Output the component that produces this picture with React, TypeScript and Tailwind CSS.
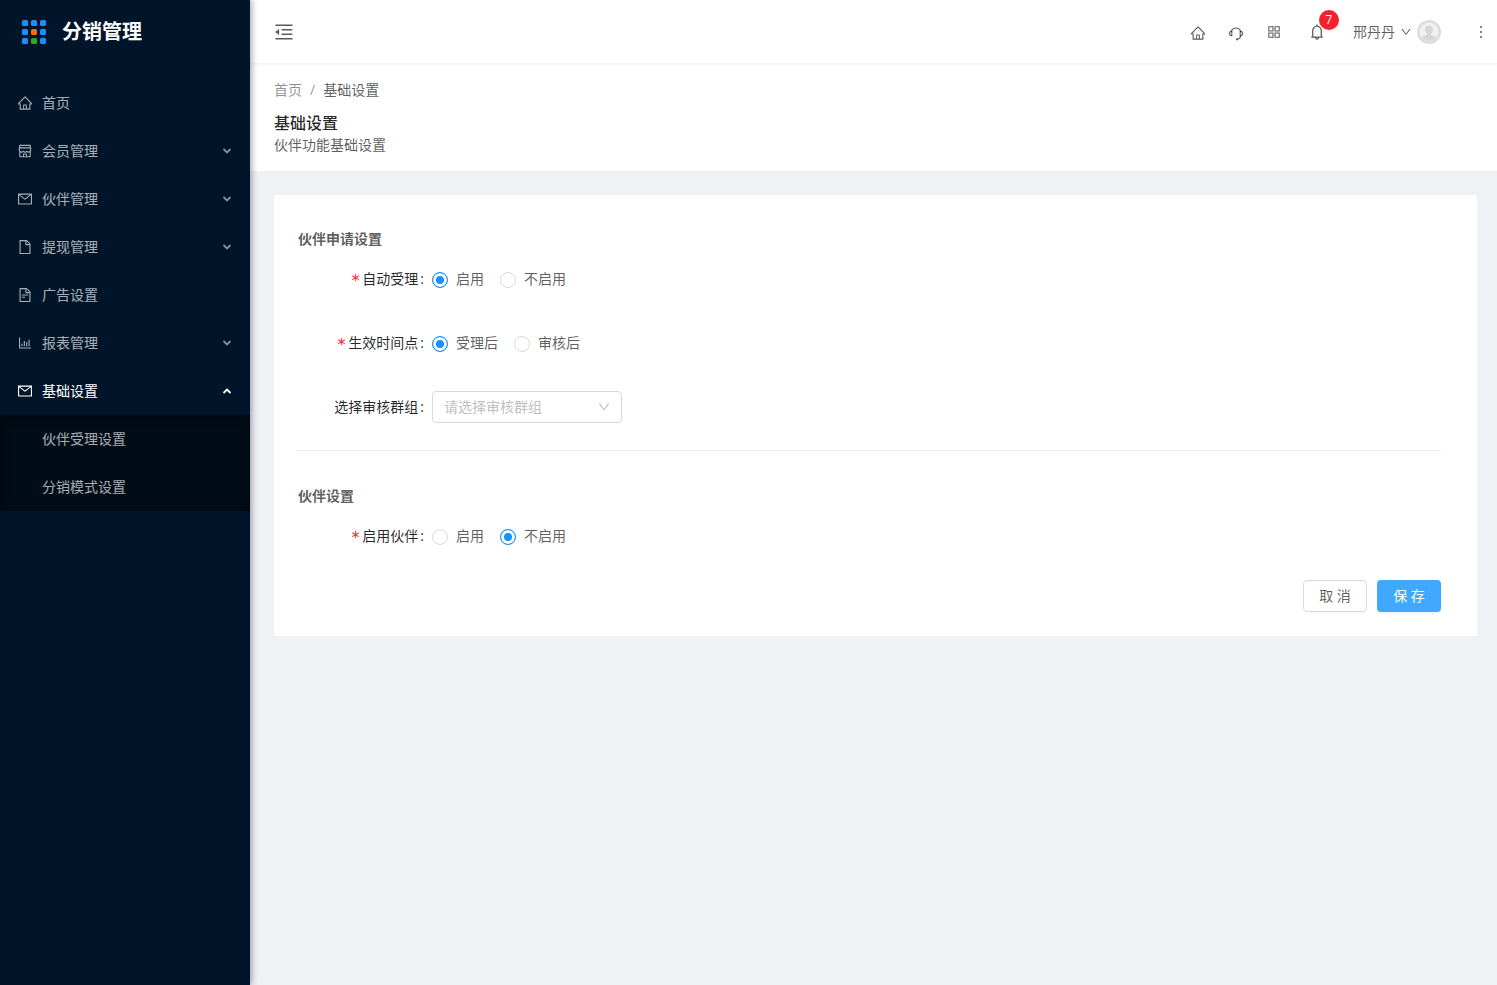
import { useState } from "react";
import type { ReactNode } from "react";
import type { IconType } from "react-icons";
import {
  AiOutlineAppstore,
  AiOutlineBarChart,
  AiOutlineBell,
  AiOutlineDown,
  AiOutlineFile,
  AiOutlineFileText,
  AiOutlineHome,
  AiOutlineMail,
  AiOutlineMenuFold,
  AiOutlineMore,
  AiOutlineShop,
} from "react-icons/ai";

type MenuItem = {
  key: string;
  label: string;
  icon: IconType;
  expandable?: boolean;
  children?: string[];
};

const menu: MenuItem[] = [
  { key: "home", label: "首页", icon: AiOutlineHome },
  { key: "member", label: "会员管理", icon: AiOutlineShop, expandable: true },
  { key: "partner", label: "伙伴管理", icon: AiOutlineMail, expandable: true },
  { key: "withdraw", label: "提现管理", icon: AiOutlineFile, expandable: true },
  { key: "ad", label: "广告设置", icon: AiOutlineFileText },
  { key: "report", label: "报表管理", icon: AiOutlineBarChart, expandable: true },
  {
    key: "basic",
    label: "基础设置",
    icon: AiOutlineMail,
    expandable: true,
    children: ["伙伴受理设置", "分销模式设置"],
  },
];

function Logo() {
  const fills = ["#1890ff", "#1890ff", "#1890ff", "#1890ff", "#ff6a00", "#1890ff", "#1890ff", "#2ea52e", "#1890ff"];
  return (
    <svg width="24" height="24" viewBox="0 0 24 24" aria-hidden="true">
      {fills.map((fill, i) => (
        <rect key={i} x={(i % 3) * 9} y={Math.floor(i / 3) * 9} width="6" height="6" rx="1.5" fill={fill} />
      ))}
    </svg>
  );
}

function MenuArrow({ open }: { open: boolean }) {
  return (
    <svg
      width="10"
      height="10"
      viewBox="0 0 10 10"
      fill="none"
      stroke="currentColor"
      strokeWidth="1.8"
      className={open ? "" : "opacity-80"}
      aria-hidden="true"
    >
      <path d={open ? "M1.5 7 5 3.5 8.5 7" : "M1.5 3 5 6.5 8.5 3"} />
    </svg>
  );
}

function HeadsetIcon() {
  return (
    <svg width="16" height="16" viewBox="0 0 16 16" fill="none" stroke="currentColor" strokeWidth="1.1" aria-hidden="true">
      <path d="M3.3 6.5a4.9 4.9 0 0 1 9.4 0" />
      <path d="M3.8 6.3v4.4c-1.500 0-2.300-.9-2.300-2.200s.8-2.200 2.300-2.200z" />
      <path d="M12.2 6.3v4.4c1.500 0 2.300-.9 2.300-2.200s-.8-2.200-2.300-2.200z" />
      <path d="M12.8 10.7c-.3 2-1.500 3.300-3.600 3.600" />
      <path d="M8 14.4h1.8" strokeWidth="1.6" />
    </svg>
  );
}

function Sidebar() {
  const [openKey, setOpenKey] = useState("basic");

  return (
    <aside className="relative z-10 w-[250px] shrink-0 bg-[#001529] shadow-[2px_0_6px_rgba(0,21,41,0.35)]">
      <div className="flex h-16 items-center gap-4 pl-[22px]">
        <Logo />
        <h1 className="text-xl font-bold text-white">分销管理</h1>
      </div>
      <nav className="pt-[15px]">
        <ul>
          {menu.map(item => {
            const Icon = item.icon;
            const open = openKey === item.key;
            return (
              <li key={item.key}>
                <button
                  className={`flex h-12 w-full items-center gap-[9px] pr-[18px] pl-[17px] text-left hover:text-white ${
                    open ? "text-white" : "text-white/65"
                  }`}
                  onClick={() => setOpenKey(open ? "" : item.key)}
                >
                  <Icon size={16} />
                  <span className="flex-1">{item.label}</span>
                  {item.expandable && <MenuArrow open={open} />}
                </button>
                {open && item.children && (
                  <ul className="bg-[#000c17] shadow-[inset_0_2px_8px_rgba(0,0,0,0.45)]">
                    {item.children.map(child => (
                      <li key={child}>
                        <a href="#" className="flex h-12 items-center pl-[42px] text-white/65 hover:text-white">
                          {child}
                        </a>
                      </li>
                    ))}
                  </ul>
                )}
              </li>
            );
          })}
        </ul>
      </nav>
    </aside>
  );
}

function Avatar() {
  return (
    <svg width="24" height="24" viewBox="0 0 24 24" aria-hidden="true">
      <circle cx="12" cy="12" r="12" fill="#dcdcdc" />
      <circle cx="12" cy="12" r="9.5" fill="#f0f0f0" />
      <circle cx="12" cy="9.5" r="4" fill="#d6d6d6" />
      <path d="M10 12h4v3c2 .5 4.5 1 5 3a9.5 9.5 0 0 1-14 0c.5-2 3-2.500 5-3z" fill="#d6d6d6" />
    </svg>
  );
}

function TopBar() {
  return (
    <header className="relative flex h-[63px] items-center bg-white pr-[7px] pl-[23px] shadow-[0_1px_4px_rgba(0,21,41,0.08)]">
      <button aria-label="收起菜单">
        <AiOutlineMenuFold size={22} />
      </button>
      <div className="ml-auto flex items-center">
        <button aria-label="主页" className="mr-[22px] pt-[3px]">
          <AiOutlineHome size={16} />
        </button>
        <button aria-label="客服" className="mr-[22px] pt-[3px]">
          <HeadsetIcon />
        </button>
        <button aria-label="应用" className="mr-[26px]">
          <AiOutlineAppstore size={16} />
        </button>
        <button aria-label="通知" className="relative mr-[27px]">
          <AiOutlineBell size={18} />
          <span className="absolute -top-[13px] left-[11px] h-5 w-5 rounded-full bg-[#f5222d] text-center text-xs leading-5 text-white">
            7
          </span>
        </button>
        <button className="flex items-center">
          <span>邢丹丹</span>
          <AiOutlineDown size={12} className="mr-[5px] ml-[5px]" />
          <Avatar />
        </button>
        <button aria-label="更多" className="ml-[31px]">
          <AiOutlineMore size={18} />
        </button>
      </div>
    </header>
  );
}

function PageHeader() {
  return (
    <div className="bg-white px-6 pt-4 pb-[15px]">
      <nav className="flex leading-[22px]">
        <a href="#" className="text-black/45">
          首页
        </a>
        <span className="mx-2 text-black/45">/</span>
        <span>基础设置</span>
      </nav>
      <h2 className="mt-[11px] text-base leading-[22px] font-medium text-black/85">基础设置</h2>
      <p className="leading-[22px]">伙伴功能基础设置</p>
    </div>
  );
}

function FormRow({ label, htmlFor, required, children }: { label: string; htmlFor?: string; required?: boolean; children: ReactNode }) {
  return (
    <div className="flex h-10 items-center">
      <div className="flex w-[134px] shrink-0 items-center justify-end pr-2 text-black/85">
        {required && <span className="mr-[2px] pt-1 font-['DejaVu_Sans_Mono',monospace] text-base text-[#f5222d]">*</span>}
        <label htmlFor={htmlFor}>{label}</label>
        <span className="ml-[2px]">:</span>
      </div>
      {children}
    </div>
  );
}

function RadioGroup({ name, options, defaultValue }: { name: string; options: string[]; defaultValue: string }) {
  const [value, setValue] = useState(defaultValue);
  return (
    <div className="flex items-center gap-4">
      {options.map(option => (
        <label key={option} className="flex cursor-pointer items-center gap-2">
          <input
            type="radio"
            name={name}
            checked={value === option}
            onChange={() => setValue(option)}
            className="mt-[2px] h-4 w-4 appearance-none rounded-full border border-[#d9d9d9] bg-white checked:border-[#1890ff] checked:bg-[#1890ff] checked:shadow-[inset_0_0_0_3px_#fff]"
          />
          {option}
        </label>
      ))}
    </div>
  );
}

export default function App() {
  return (
    <div className="flex min-h-screen bg-[#f0f1f5] font-['Open_Sans','Noto_Sans_CJK_SC',sans-serif] text-sm text-black/65">
      <Sidebar />
      <div className="min-w-0 flex-1">
        <TopBar />
        <PageHeader />
        <main className="pt-6 pr-5 pl-6">
          <form className="bg-white pt-[33px] pr-9 pb-6 pl-6" onSubmit={e => e.preventDefault()}>
            <h3 className="mb-[9px] leading-[22px] font-bold">伙伴申请设置</h3>
            <div className="flex flex-col gap-6">
              <FormRow label="自动受理" required>
                <RadioGroup name="auto" options={["启用", "不启用"]} defaultValue="启用" />
              </FormRow>
              <FormRow label="生效时间点" required>
                <RadioGroup name="effective" options={["受理后", "审核后"]} defaultValue="受理后" />
              </FormRow>
              <FormRow label="选择审核群组" htmlFor="group">
                <div className="relative w-[190px]">
                  <select
                    id="group"
                    defaultValue=""
                    className="h-8 w-full appearance-none rounded border border-[#d9d9d9] bg-white pr-8 pl-[11px] text-[#bfbfbf]"
                  >
                    <option value="">请选择审核群组</option>
                  </select>
                  <AiOutlineDown size={14} className="pointer-events-none absolute top-[9px] right-[11px] text-black/25" />
                </div>
              </FormRow>
            </div>

            <hr className="mt-[23px] mb-[34px] border-[#e8e8e8]" />

            <h3 className="mb-[9px] leading-[22px] font-bold">伙伴设置</h3>
            <FormRow label="启用伙伴" required>
              <RadioGroup name="partner" options={["启用", "不启用"]} defaultValue="不启用" />
            </FormRow>

            <div className="mt-6 flex justify-end gap-[10px]">
              <button type="button" className="h-8 w-16 rounded border border-[#d9d9d9] bg-white shadow-[0_2px_0_rgba(0,0,0,0.015)]">
                取 消
              </button>
              <button type="submit" className="h-8 w-16 rounded bg-[#40a9ff] text-white shadow-[0_2px_0_rgba(0,0,0,0.045)]">
                保 存
              </button>
            </div>
          </form>
        </main>
      </div>
    </div>
  );
}
